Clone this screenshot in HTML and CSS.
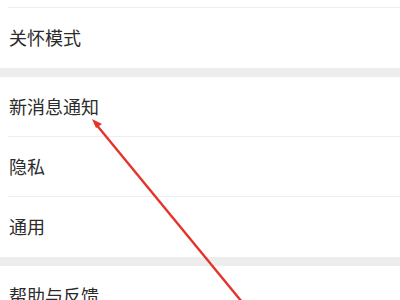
FILE: index.html
```html
<!DOCTYPE html>
<html lang="zh-CN">
<head>
    <meta charset="UTF-8">
    <meta name="viewport" content="width=device-width, initial-scale=1.0">
    <title>设置</title>
    <link rel="stylesheet" href="styles.css">
</head>
<body>
    <div class="settings">
        <div class="group">
            <div class="row row-top"></div>
            <div class="row">关怀模式</div>
        </div>
        <div class="group">
            <div class="row">新消息通知</div>
            <div class="row">隐私</div>
            <div class="row">通用</div>
        </div>
        <div class="group">
            <div class="row">帮助与反馈</div>
        </div>
    </div>

    <!-- annotation arrow -->
    <svg class="arrow" width="400" height="300" viewBox="0 0 400 300">
        <line x1="95" y1="123" x2="242" y2="302" stroke="#e5332a" stroke-width="2.4"/>
        <polygon points="92,119 102,124 96,128" fill="#e5332a"/>
    </svg>
</body>
</html>
```

FILE: styles.css
```css
body {
    margin: 0;
    background: #fff;
    font-family: "Noto Sans CJK SC", "Noto Sans", sans-serif;
    overflow: hidden;
}
.group {
    background: #fff;
    border-bottom: 9px solid #ededed;
}
.row {
    height: 59px;
    line-height: 59px;
    margin-left: 8px;
    padding-left: 1px;
    font-size: 18px;
    color: #2b2b2b;
    border-bottom: 1px solid #eeeeee;
}
.row-top {
    height: 7px;
}
.row:last-child {
    border-bottom: none;
    height: 60px;
}
.arrow {
    position: absolute;
    left: 0;
    top: 0;
}
```
